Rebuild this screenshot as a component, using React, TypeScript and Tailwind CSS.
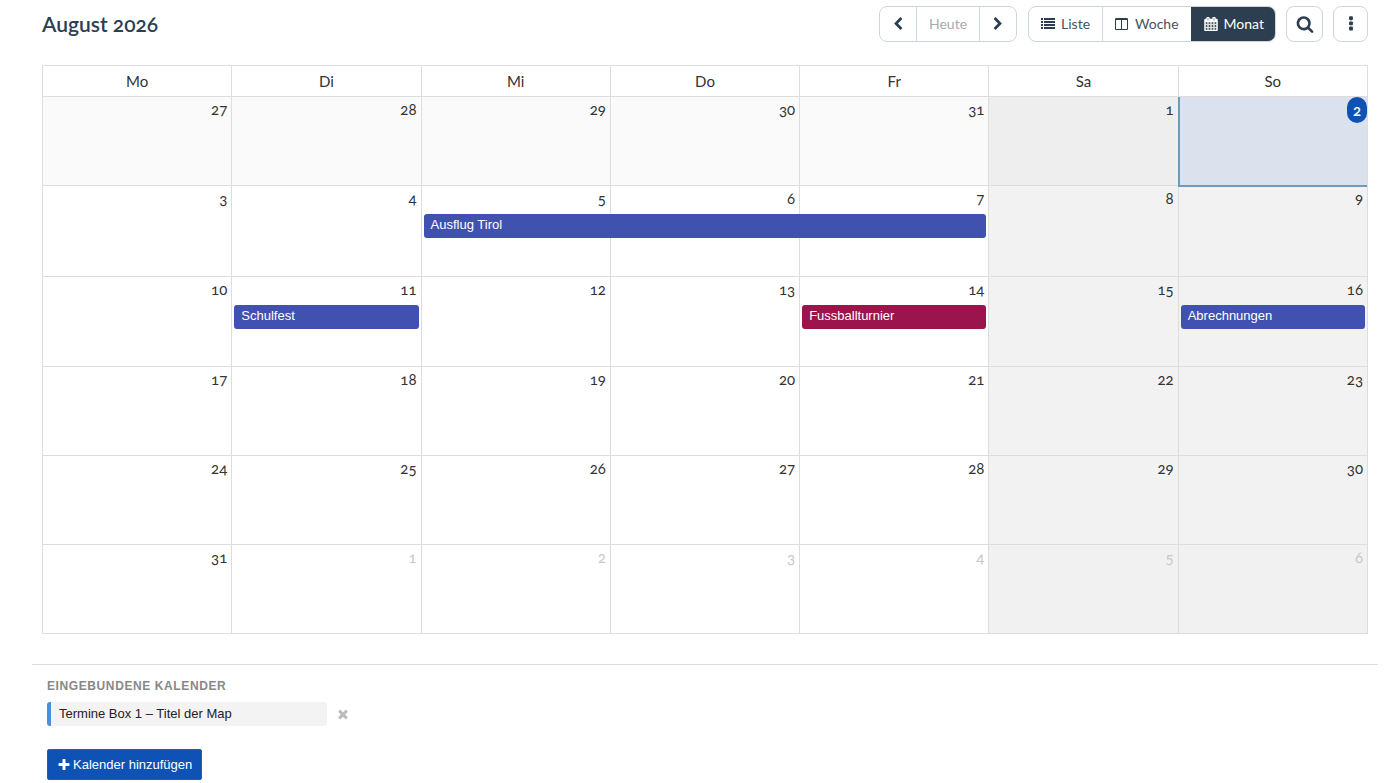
import { useState } from "react";

const ICONS = {
  left: "M1427 301l-531 531 531 531q19 19 19 45t-19 45l-166 166q-19 19-45 19t-45-19l-742-742q-19-19-19-45t19-45l742-742q19-19 45-19t45 19l166 166q19 19 19 45t-19 45z",
  right:
    "M1363 877l-742 742q-19 19-45 19t-45-19l-166-166q-19-19-19-45t19-45l531-531-531-531q-19-19-19-45t19-45l166-166q19-19 45-19t45 19l742 742q19 19 19 45t-19 45z",
  list: "M0 128h256v256h-256zM384 128h1408v256h-1408zM0 512h256v256h-256zM384 512h1408v256h-1408zM0 896h256v256h-256zM384 896h1408v256h-1408zM0 1280h256v256h-256zM384 1280h1408v256h-1408z",
  columns:
    "M160 1536h608v-1152h-640v1120q0 13 9.5 22.5t22.5 9.5zm1376-32v-1120h-640v1152h608q13 0 22.5-9.5t9.5-22.5zm128-1216v1216q0 66-47 113t-113 47h-1344q-66 0-113-47t-47-113v-1216q0-66 47-113t113-47h1344q66 0 113 47t47 113z",
  calendar:
    "M192 1664h288v-288h-288v288zm352 0h320v-288h-320v288zm-352-352h288v-320h-288v320zm352 0h320v-320h-320v320zm-352-384h288v-288h-288v288zm736 736h320v-288h-320v288zm-384-736h320v-288h-320v288zm768 736h288v-288h-288v288zm-384-352h320v-320h-320v320zm-352-864v-288q0-13-9.5-22.5t-22.5-9.5h-64q-13 0-22.5 9.5t-9.5 22.5v288q0 13 9.5 22.5t22.5 9.5h64q13 0 22.5-9.5t9.5-22.5zm736 864h288v-320h-288v320zm-384-384h320v-288h-320v288zm384 0h288v-288h-288v288zm32-480v-288q0-13-9.5-22.5t-22.5-9.5h-64q-13 0-22.5 9.5t-9.5 22.5v288q0 13 9.5 22.5t22.5 9.5h64q13 0 22.5-9.5t9.5-22.5zm384-64v1280q0 52-38 90t-90 38h-1408q-52 0-90-38t-38-90v-1280q0-52 38-90t90-38h128v-96q0-66 47-113t113-47h64q66 0 113 47t47 113v96h384v-96q0-66 47-113t113-47h64q66 0 113 47t47 113v96h128q52 0 90 38t38 90z",
  search:
    "M1216 832q0-185-131.5-316.5t-316.5-131.5-316.5 131.5-131.5 316.5 131.5 316.5 316.5 131.5 316.5-131.5 131.5-316.5zm512 832q0 52-38 90t-90 38q-54 0-90-38l-343-342q-179 124-399 124-143 0-273.5-55.5t-225-150-150-225-55.5-273.5 55.5-273.5 150-225 225-150 273.5-55.5 273.5 55.5 225 150 150 225 55.5 273.5q0 220-124 399l343 343q37 37 37 90z",
  dots: "M1088 1248v192q0 40-28 68t-68 28h-192q-40 0-68-28t-28-68v-192q0-40 28-68t68-28h192q40 0 68 28t28 68zm0-512v192q0 40-28 68t-68 28h-192q-40 0-68-28t-28-68v-192q0-40 28-68t68-28h192q40 0 68 28t28 68zm0-512v192q0 40-28 68t-68 28h-192q-40 0-68-28t-28-68v-192q0-40 28-68t68-28h192q40 0 68 28t28 68z",
  times:
    "M1490 1322q0 40-28 68l-136 136q-28 28-68 28t-68-28l-294-294-294 294q-28 28-68 28t-68-28l-136-136q-28-28-28-68t28-68l294-294-294-294q-28-28-28-68t28-68l136-136q28-28 68-28t68 28l294 294 294-294q28-28 68-28t68 28l136 136q28 28 28 68t-28 68l-294 294 294 294q28 28 28 68z",
  plus: "M1600 736v192q0 40-28 68t-68 28h-416v416q0 40-28 68t-68 28h-192q-40 0-68-28t-28-68v-416h-416q-40 0-68-28t-28-68v-192q0-40 28-68t68-28h416v-416q0-40 28-68t68-28h192q40 0 68 28t28 68v416h416q40 0 68 28t28 68z",
};

function Icon({ name, className }: { name: keyof typeof ICONS; className: string }) {
  return (
    <svg
      viewBox="0 0 1792 1792"
      fill="currentColor"
      stroke="currentColor"
      strokeWidth={name === "calendar" ? 70 : 0}
      aria-hidden="true"
      className={className}
    >
      <path d={ICONS[name]} />
    </svg>
  );
}

type CalEvent = { title: string; color: string; width: string };

const DAYS = ["Mo", "Di", "Mi", "Do", "Fr", "Sa", "So"];

const WEEKS = [
  [27, 28, 29, 30, 31, 1, 2],
  [3, 4, 5, 6, 7, 8, 9],
  [10, 11, 12, 13, 14, 15, 16],
  [17, 18, 19, 20, 21, 22, 23],
  [24, 25, 26, 27, 28, 29, 30],
  [31, 1, 2, 3, 4, 5, 6],
];

// key is "week-day"
const EVENTS: Record<string, CalEvent> = {
  "1-2": { title: "Ausflug Tirol", color: "bg-[#4051b0]", width: "w-[calc(300%-2px)]" },
  "2-1": { title: "Schulfest", color: "bg-[#4051b0]", width: "" },
  "2-4": { title: "Fussballturnier", color: "bg-[#9b144b]", width: "" },
  "2-6": { title: "Abrechnungen", color: "bg-[#4051b0]", width: "" },
};

const VIEWS = [
  { label: "Liste", icon: "list" },
  { label: "Woche", icon: "columns" },
  { label: "Monat", icon: "calendar" },
] as const;

function rowHeight(week: number) {
  if (week === 1) return "h-[91px]";
  return week === 2 ? "h-[90px]" : "h-[89px]";
}

function cellColor(week: number, day: number) {
  if (week === 0 && day === 6) return "bg-[#dce1ee]";
  if (day > 4) return week === 0 ? "bg-[#eeeeee]" : week === 5 ? "bg-[#f1f1f1]" : "bg-[#f2f2f2]";
  return week === 0 ? "bg-[#fafafa]" : "bg-white";
}

export default function App() {
  const [view, setView] = useState("Monat");

  return (
    <main className="pr-[19px] pl-8 pt-1.5 font-['Liberation_Sans',sans-serif] text-[#2c3e50]">
      <header className="mx-2.5 flex h-9 items-center justify-between font-[Lato,sans-serif]">
        <h1 className="text-[21px] leading-9 font-semibold oldstyle-nums">August 2026</h1>

        <div className="flex text-sm">
          <div className="mr-[11px] flex h-9 divide-x divide-[#ccd5dc] overflow-hidden rounded-lg border border-[#ccd5dc]">
            <button aria-label="Zurück" className="flex w-[37px] items-center justify-center">
              <Icon name="left" className="size-3.5" />
            </button>
            <button disabled className="w-[63px] text-center text-[#a5abb3]">
              Heute
            </button>
            <button aria-label="Weiter" className="flex w-9 items-center justify-center">
              <Icon name="right" className="size-3.5" />
            </button>
          </div>

          <div className="mr-2.5 flex h-9 divide-x divide-[#ccd5dc] overflow-hidden rounded-lg border border-[#ccd5dc]">
            {VIEWS.map((v) => (
              <button
                key={v.label}
                onClick={() => setView(v.label)}
                className={`flex items-center justify-center gap-1.5 px-3 ${
                  view === v.label ? "-m-px pl-[13px] bg-[#2c3e50] text-white" : "text-[#45535f]"
                }`}
              >
                <Icon name={v.icon} className={view === v.label ? "size-3.5" : "size-3.5 text-[#2c3e50]"} />
                {v.label}
              </button>
            ))}
          </div>

          <button
            aria-label="Suchen"
            className="mr-2.5 flex h-9 w-[37px] items-center justify-center rounded-lg border border-[#ccd5dc]"
          >
            <Icon name="search" className="size-[18px]" />
          </button>
          <button
            aria-label="Mehr"
            className="flex h-9 w-[35px] items-center justify-center rounded-lg border border-[#ccd5dc]"
          >
            <Icon name="dots" className="size-[18px]" />
          </button>
        </div>
      </header>

      <div className="mx-2.5 mt-[23px]">
        <table className="w-full table-fixed border-collapse font-[Lato,sans-serif] text-[15px] text-[#333]">
          <thead>
            <tr className="h-[31px]">
              {DAYS.map((d) => (
                <th key={d} className="border border-[#dddddd] p-0 leading-6 font-normal">
                  {d}
                </th>
              ))}
            </tr>
          </thead>
          <tbody>
            {WEEKS.map((week, w) => (
              <tr key={w} className={rowHeight(w)}>
                {week.map((day, d) => {
                  const event = EVENTS[`${w}-${d}`];
                  const today = w === 0 && d === 6;
                  const other = w === 5 && d > 0;
                  return (
                    <td key={d} className={`relative border border-[#dddddd] p-0 align-top ${cellColor(w, d)}`}>
                      {today && (
                        <div className="absolute top-0 right-0 -bottom-0.5 -left-px z-10 border-b-2 border-l-2 border-[#6b9dbb]" />
                      )}
                      <div className="flex h-7 justify-end oldstyle-nums">
                        {today ? (
                          <span className="relative h-[26px] w-5 rounded-[10px] bg-[#0f52b5] text-center leading-[26px] font-semibold text-white">
                            {day}
                          </span>
                        ) : (
                          <span className={`pr-1 leading-6 ${other ? "text-[#c8c8c8]" : ""}`}>{day}</span>
                        )}
                      </div>
                      {event && (
                        <a
                          href="#"
                          className={`relative z-10 mx-0.5 block h-6 rounded-[3px] px-[7px] font-['Liberation_Sans',sans-serif] text-[13px] leading-[22px] text-white ${event.color} ${event.width}`}
                        >
                          {event.title}
                        </a>
                      )}
                    </td>
                  );
                })}
              </tr>
            ))}
          </tbody>
        </table>
      </div>

      <section className="mt-[30px] border-t border-[#dddddd] px-[15px] pt-3">
        <h2 className="text-xs leading-[18px] font-bold tracking-wider text-[#888]">EINGEBUNDENE KALENDER</h2>
        <div className="mt-[7px] flex items-center gap-[9px]">
          <div className="h-6 w-[280px] rounded-[3px] border-l-4 border-[#4a90d9] bg-[#f3f3f3] px-2 text-[13px] leading-6 text-[#222]">
            Termine Box 1 – Titel der Map
          </div>
          <button aria-label="Kalender entfernen" className="text-[#bbb]">
            <Icon name="times" className="size-3.5" />
          </button>
        </div>
        <button className="mt-[23px] flex h-[31px] items-center gap-0.5 rounded-[2px] border border-[#1b63b5] bg-[#0f52b5] px-[9px] text-[13px] text-white">
          <Icon name="plus" className="size-3.5" />
          Kalender hinzufügen
        </button>
      </section>
    </main>
  );
}
